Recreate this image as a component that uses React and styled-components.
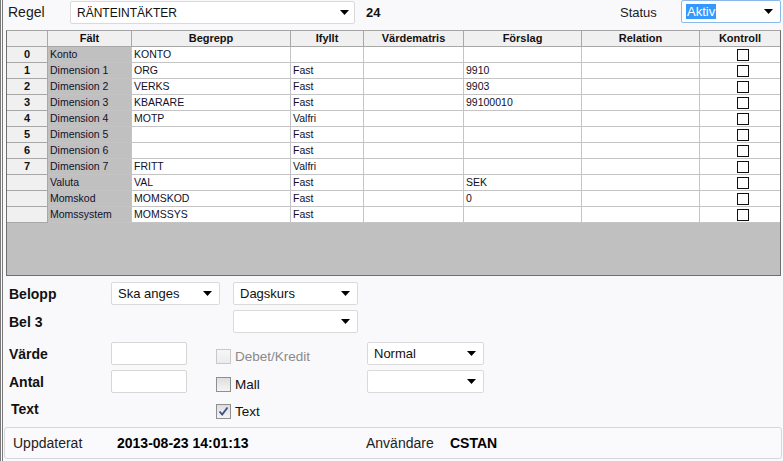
import React from "react";
import styled, { createGlobalStyle } from "styled-components";

const rows = [
  { nr: "0", falt: "Konto", begrepp: "KONTO", ifyllt: "", forslag: "" },
  { nr: "1", falt: "Dimension 1", begrepp: "ORG", ifyllt: "Fast", forslag: "9910" },
  { nr: "2", falt: "Dimension 2", begrepp: "VERKS", ifyllt: "Fast", forslag: "9903" },
  { nr: "3", falt: "Dimension 3", begrepp: "KBARARE", ifyllt: "Fast", forslag: "99100010" },
  { nr: "4", falt: "Dimension 4", begrepp: "MOTP", ifyllt: "Valfri", forslag: "" },
  { nr: "5", falt: "Dimension 5", begrepp: "", ifyllt: "Fast", forslag: "" },
  { nr: "6", falt: "Dimension 6", begrepp: "", ifyllt: "Fast", forslag: "" },
  { nr: "7", falt: "Dimension 7", begrepp: "FRITT", ifyllt: "Valfri", forslag: "" },
  { nr: "", falt: "Valuta", begrepp: "VAL", ifyllt: "Fast", forslag: "SEK" },
  { nr: "", falt: "Momskod", begrepp: "MOMSKOD", ifyllt: "Fast", forslag: "0" },
  { nr: "", falt: "Momssystem", begrepp: "MOMSSYS", ifyllt: "Fast", forslag: "" },
];

const headers = ["", "Fält", "Begrepp", "Ifyllt", "Värdematris", "Förslag", "Relation", "Kontroll"];

const Arrow = () => (
  <svg width="9" height="5" viewBox="0 0 9 5">
    <polygon points="0,0 9,0 4.5,5" fill="#000" />
  </svg>
);

const Select = ({ value, width, focused, arrowRight = 7, small }) => (
  <SelectBox $w={width} $focused={focused} $small={small}>
    {focused ? <Selected>{value}</Selected> : <span>{value}</span>}
    <ArrowSlot $r={arrowRight}>
      <Arrow />
    </ArrowSlot>
  </SelectBox>
);

const Check = ({ label, checked, disabled }) => (
  <CheckItem $disabled={disabled}>
    <Box $disabled={disabled}>
      {checked && (
        <svg width="11" height="11" viewBox="0 0 11 11">
          <path d="M1.5 5.5 L4.2 8.5 L9.5 1.5" stroke="#3c4f88" strokeWidth="1.8" fill="none" />
        </svg>
      )}
    </Box>
    {label}
  </CheckItem>
);

const App = () => (
  <>
    <GlobalStyle />
    <Window>
      <TopBar>
        <TopLabel>Regel</TopLabel>
        <Select value="RÄNTEINTÄKTER" width={285} arrowRight={5} small />
        <Number>24</Number>
        <StatusLabel>Status</StatusLabel>
        <Select value="Aktiv" width={100} focused />
      </TopBar>

      <Grid>
        <GridRow>
          {headers.map((h, i) => (
            <HeadCell key={i} $last={i === headers.length - 1}>
              {h}
            </HeadCell>
          ))}
        </GridRow>
        {rows.map((r) => (
          <GridRow key={r.falt}>
            <RowHead>{r.nr}</RowHead>
            <Cell $grey>{r.falt}</Cell>
            <Cell>{r.begrepp}</Cell>
            <Cell>{r.ifyllt}</Cell>
            <Cell />
            <Cell>{r.forslag}</Cell>
            <Cell />
            <Cell $last $center>
              <GridCheck />
            </Cell>
          </GridRow>
        ))}
        <Filler />
      </Grid>

      <Form>
        <FormRow $h={23}>
          <FieldLabel>Belopp</FieldLabel>
          <Slot $col="2 / 4">
            <Select value="Ska anges" width={109} />
          </Slot>
          <Slot $col="4">
            <Select value="Dagskurs" width={125} />
          </Slot>
        </FormRow>
        <FormRow $h={23} $top={5}>
          <FieldLabel>Bel 3</FieldLabel>
          <Slot $col="4">
            <Select value="" width={125} />
          </Slot>
        </FormRow>
        <FormRow $h={23} $top={9}>
          <FieldLabel>Värde</FieldLabel>
          <Slot $col="2">
            <Input />
          </Slot>
          <Slot $col="3 / 5">
            <Check label="Debet/Kredit" disabled />
          </Slot>
          <Slot $col="5">
            <Select value="Normal" width={117} />
          </Slot>
        </FormRow>
        <FormRow $h={23} $top={5}>
          <FieldLabel>Antal</FieldLabel>
          <Slot $col="2">
            <Input />
          </Slot>
          <Slot $col="3 / 5">
            <Check label="Mall" />
          </Slot>
          <Slot $col="5">
            <Select value="" width={117} />
          </Slot>
        </FormRow>
        <FormRow $h={22} $top={5}>
          <FieldLabel $pad={2}>Text</FieldLabel>
          <Slot $col="3 / 5">
            <Check label="Text" checked />
          </Slot>
        </FormRow>
      </Form>

      <Footer>
        <FooterField $w={104}>Uppdaterat</FooterField>
        <FooterField $w={249} $bold>
          2013-08-23 14:01:13
        </FooterField>
        <FooterField $w={84}>Användare</FooterField>
        <FooterField $bold>CSTAN</FooterField>
      </Footer>
    </Window>
  </>
);

// Styles
const GlobalStyle = createGlobalStyle`
  html, body { margin: 0; padding: 0; background: #f9f9fb; }
  * { box-sizing: border-box; }
`;

const Window = styled.div`
  width: 783px;
  height: 461px;
  display: flex;
  flex-direction: column;
  overflow: hidden;
  background: #f9f9fb;
  border-left: 3px double #7a7a7a;
  font-family: "Liberation Sans", Arial, sans-serif;
  color: #111;
`;

const TopBar = styled.div`
  height: 30px;
  display: flex;
  align-items: flex-start;
  padding-right: 2px;
`;

const TopLabel = styled.div`
  width: 67px;
  padding-left: 5px;
  font-size: 14px;
  line-height: 25px;
  color: #1a1a1a;
`;

const Number = styled.div`
  margin-left: 11px;
  font-size: 13px;
  font-weight: bold;
  line-height: 25px;
`;

const StatusLabel = styled.div`
  margin-left: auto;
  width: 61px;
  font-size: 13px;
  line-height: 25px;
  color: #1a1a1a;
`;

const SelectBox = styled.div`
  position: relative;
  width: ${(p) => p.$w}px;
  height: 23px;
  margin-top: ${(p) => (p.$small ? 1 : 0)}px;
  padding-left: 6px;
  display: flex;
  align-items: center;
  background: #fff;
  border: 1px solid ${(p) => (p.$focused ? "#8ab8ea" : "#dadada")};
  border-radius: 2px;
  font-size: ${(p) => (p.$small ? 12 : 13)}px;
  color: #111;
`;

const Selected = styled.span`
  background: #3399ff;
  color: #fff;
  line-height: 15px;
  margin-left: -2px;
  padding: 0 1px;
`;

const ArrowSlot = styled.span`
  position: absolute;
  right: ${(p) => p.$r}px;
  top: 8px;
  display: flex;
`;

const Grid = styled.div`
  margin-left: 3px;
  width: 775px;
  height: 246px;
  display: flex;
  flex-direction: column;
  border: 1px solid #6e6e6e;
  border-top-color: #a4a4a4;
  font-size: 10.5px;
`;

const GridRow = styled.div`
  display: grid;
  grid-template-columns: 41px 84px 159px 73px 100px 118px 118px 1fr;
  height: 16px;
`;

const HeadCell = styled.div`
  background: #f0f0f0;
  border-bottom: 1px solid #a8a8a8;
  border-right: ${(p) => (p.$last ? "none" : "1px solid #a8a8a8")};
  font-size: 11px;
  font-weight: bold;
  line-height: 15px;
  text-align: center;
  color: #111;
`;

const RowHead = styled.div`
  background: #f0f0f0;
  border-bottom: 1px solid #a8a8a8;
  border-right: 1px solid #a8a8a8;
  font-size: 11px;
  font-weight: bold;
  line-height: 15px;
  text-align: center;
`;

const Cell = styled.div`
  display: flex;
  align-items: center;
  justify-content: ${(p) => (p.$center ? "center" : "flex-start")};
  padding-left: ${(p) => (p.$center ? 5 : 2)}px;
  background: ${(p) => (p.$grey ? "#c0c0c0" : "#fff")};
  border-bottom: 1px solid #c4c4c4;
  border-right: ${(p) => (p.$last ? "none" : "1px solid #c4c4c4")};
  line-height: 15px;
  white-space: nowrap;
  color: #10102a;
`;

const GridCheck = styled.span`
  width: 12px;
  height: 12px;
  border: 1px solid #111;
  background: #fff;
`;

const Filler = styled.div`
  flex: 1;
  background: #c0c0c0;
`;

const Form = styled.div`
  padding: 6px 0 0 6px;
`;

const FormRow = styled.div`
  display: grid;
  grid-template-columns: 102px 105px 17px 134px 1fr;
  height: ${(p) => p.$h}px;
  margin-top: ${(p) => p.$top || 0}px;
`;

const FieldLabel = styled.div`
  grid-column: 1;
  align-self: center;
  padding-left: ${(p) => p.$pad || 0}px;
  font-size: 14px;
  font-weight: bold;
  color: #111;
`;

const Slot = styled.div`
  grid-column: ${(p) => p.$col};
  display: flex;
  align-items: stretch;
`;

const Input = styled.div`
  width: 76px;
  height: 23px;
  background: #fff;
  border: 1px solid #d6d6d6;
  border-radius: 2px;
`;

const CheckItem = styled.div`
  align-self: flex-end;
  margin-bottom: 1px;
  display: flex;
  align-items: center;
  gap: 4px;
  font-size: 13.5px;
  color: ${(p) => (p.$disabled ? "#8a8a8a" : "#111")};
`;

const Box = styled.span`
  width: 15px;
  height: 15px;
  display: flex;
  align-items: center;
  justify-content: center;
  border: 1px solid ${(p) => (p.$disabled ? "#c8c8c8" : "#8e8f8f")};
  background: ${(p) =>
    p.$disabled
      ? "linear-gradient(#f6f6f6, #ececec)"
      : "linear-gradient(#dedede, #f4f4f4)"};
`;

const Footer = styled.div`
  margin: auto 1px 2px 1px;
  height: 32px;
  display: flex;
  align-items: center;
  padding-left: 8px;
  background: #fafafc;
  border: 1px solid #d6d6de;
  border-radius: 3px;
  font-size: 14px;
`;

const FooterField = styled.div`
  width: ${(p) => (p.$w ? `${p.$w}px` : "auto")};
  font-weight: ${(p) => (p.$bold ? "bold" : "normal")};
  color: ${(p) => (p.$bold ? "#000" : "#222")};
`;

export default App;
